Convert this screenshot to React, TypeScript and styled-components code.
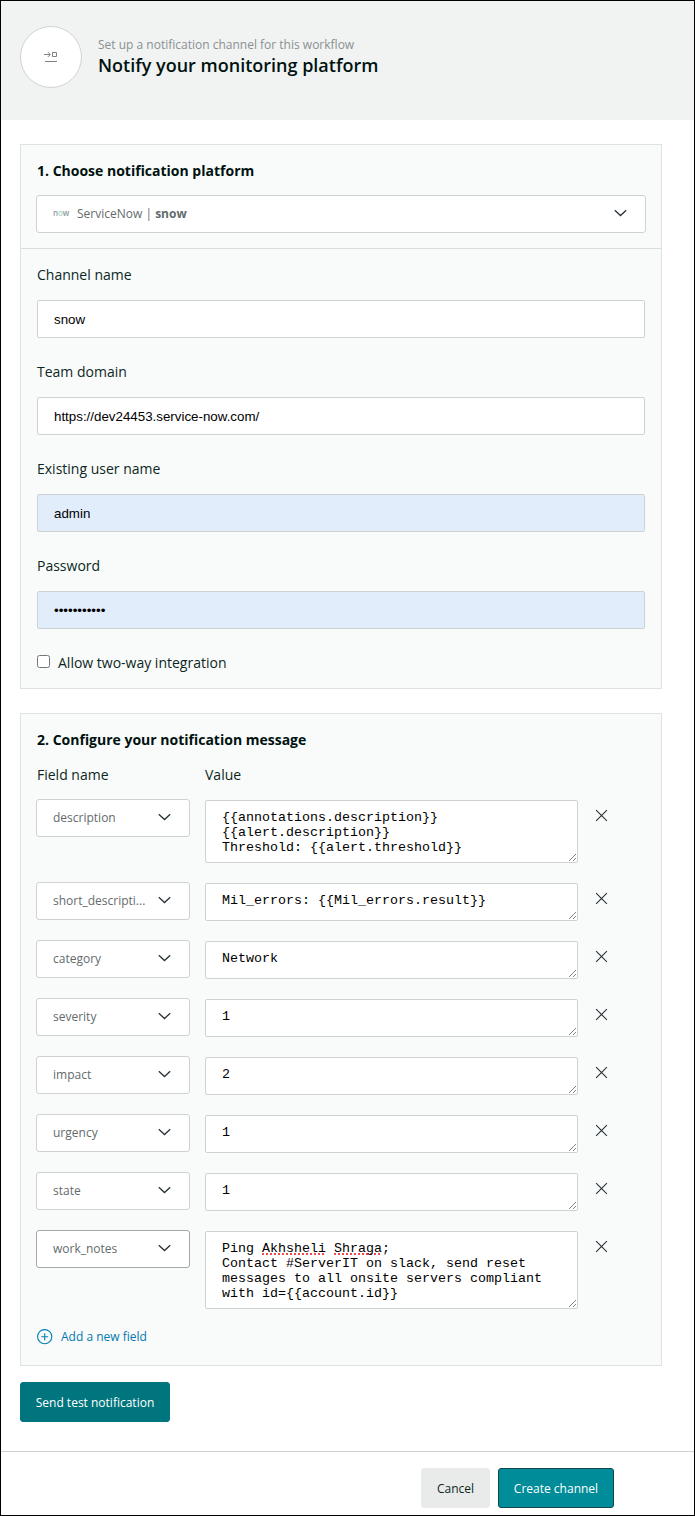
import React from 'react';
import styled, { createGlobalStyle } from 'styled-components';

const Global = createGlobalStyle`
  *, *::before, *::after { box-sizing: border-box; }
  body { margin: 0; background: #fff; }
`;

const Page = styled.div`
  width: 695px;
  height: 1516px;
  border: 1px solid #000;
  background: #fff;
  color: #00120f;
  font-family: 'Open Sans', 'Noto Sans', sans-serif;
  font-size: 14px;
  display: flex;
  flex-direction: column;
`;

const Header = styled.header`
  display: flex;
  flex: none;
  height: 119px;
  padding: 25px 19px;
  gap: 16px;
  background: #f1f3f3;
`;

const RoundIcon = styled.div`
  display: flex;
  align-items: center;
  justify-content: center;
  width: 62px;
  height: 62px;
  border: 1px solid #d0d3d3;
  border-radius: 50%;
  background: #fff;
`;

const Heading = styled.div`
  padding-top: 10px;
`;

const Subtitle = styled.div`
  font-size: 12px;
  line-height: 18px;
  color: #8a9090;
  white-space: nowrap;
`;

const Title = styled.h1`
  margin: 0;
  font-size: 18px;
  line-height: 22px;
  font-weight: 600;
  white-space: nowrap;
`;

const Main = styled.main`
  display: flex;
  flex: 1;
  flex-direction: column;
  align-items: flex-start;
  padding: 24px 32px 0 19px;
`;

const Panel = styled.section<{ $height: number }>`
  width: 642px;
  height: ${(p) => p.$height}px;
  margin-bottom: ${(p) => (p.$height > 600 ? 16 : 24)}px;
  border: 1px solid #dfe2e2;
  background: #f9fbfa;
`;

const PlatformArea = styled.div`
  height: 104px;
  padding: 16px 16px 0;
  border-bottom: 1px solid #dadddd;
`;

const FormArea = styled.div`
  padding: 16px 16px 0;
`;

const SectionTitle = styled.h2`
  margin: 0;
  font-size: 14px;
  line-height: 20px;
  font-weight: 700;
  white-space: nowrap;
`;

const Select = styled.div<{ $wide?: boolean; $active?: boolean }>`
  display: flex;
  align-items: center;
  justify-content: space-between;
  width: ${(p) => (p.$wide ? 610 : 154)}px;
  height: 38px;
  margin: ${(p) => (p.$wide ? '14px' : '-1px')} -1px 0;
  padding: 0 18px 2px 16px;
  border: 1px solid ${(p) => (p.$active ? '#a3a8a8' : '#cfd2d2')};
  border-radius: 3px;
  background: #fff;
  color: #646b6c;
  font-size: 12px;
  white-space: nowrap;
`;

const Platform = styled.span`
  display: flex;
  align-items: center;
  gap: 8px;

  b { font-weight: 700; }
`;

const NowMark = styled.span`
  width: 16px;
  font-size: 8px;
  line-height: 10px;
  font-weight: 600;
  letter-spacing: -0.1px;
  color: #8f9a9a;

  i { font-style: normal; color: #9adcc6; }
`;

const Label = styled.label`
  display: block;
  line-height: 20px;
  color: #0c2723;
  white-space: nowrap;
`;

const Field = styled.div`
  height: 97px;
`;

const Input = styled.input<{ $filled?: boolean }>`
  display: block;
  width: 608px;
  height: 38px;
  margin: 15px 0 0;
  padding: 1px 16px 0;
  border: 1px solid #cfd2d2;
  border-radius: 2px;
  outline: none;
  background: ${(p) => (p.$filled ? '#e2edfc' : '#fff')};
  color: #000;
  font: 13.333px 'Liberation Sans', Arial, sans-serif;
`;

const CheckRow = styled.div`
  display: flex;
  align-items: center;
  gap: 8px;
`;

const Checkbox = styled.input`
  width: 13px;
  height: 13px;
  margin: 0 0 3px;
`;

const Columns = styled.div`
  display: grid;
  grid-template-columns: 168px 1fr;
  margin: 15px 0;
`;

const Rows = styled.div`
  display: flex;
  flex-direction: column;
  gap: 20px;
`;

const Row = styled.div`
  display: grid;
  grid-template-columns: 152px 373px 14px;
  column-gap: 16px;
  align-items: start;
`;

const MessageBox = styled.div`
  position: relative;
  min-height: 38px;
  padding: 9px 16px 7px;
  border: 1px solid #cfd2d2;
  border-radius: 2px;
  background: #fff;
  color: #000;
  font: 13.333px/15px 'Liberation Mono', 'Courier New', monospace;
  white-space: pre;
`;

const Line = styled.div`
  display: flex;
  height: 15px;
`;

const Grip = styled.svg`
  position: absolute;
  right: 0;
  bottom: 0;
`;

const Misspelled = styled.span`
  height: 15px;
  text-decoration: underline dotted #f0494c 2px;
  text-underline-offset: 1px;
  text-decoration-skip-ink: none;
`;

const RemoveButton = styled.button`
  display: flex;
  margin: 8px 0 0 1px;
  padding: 0;
  border: 0;
  background: none;
`;

const AddField = styled.a`
  display: flex;
  align-items: center;
  gap: 8px;
  margin-top: 19px;
  line-height: 18px;
  font-size: 12px;
  color: #0079b0;
`;

const Button = styled.button<{ $kind: 'test' | 'cancel' | 'create' }>`
  width: ${(p) => ({ test: 150, cancel: 69, create: 116 })[p.$kind]}px;
  height: 40px;
  padding: 2px 0 0;
  border: 1px solid ${(p) => ({ test: '#00757d', cancel: '#e9ebeb', create: '#10494d' })[p.$kind]};
  border-radius: 3px;
  background: ${(p) => ({ test: '#00757d', cancel: '#e9ebeb', create: '#008c99' })[p.$kind]};
  color: ${(p) => (p.$kind === 'cancel' ? '#0c2723' : '#fff')};
  font: 12px/18px 'Open Sans', 'Noto Sans', sans-serif;
  white-space: nowrap;
`;

const Footer = styled.footer`
  display: flex;
  flex: none;
  justify-content: flex-end;
  gap: 8px;
  height: 64px;
  padding: 16px 80px 0 0;
  border-top: 1px solid #cfd2d2;
`;

const Chevron = () => (
  <svg width="13" height="8" viewBox="0 0 13 8" fill="none" stroke="#293338" strokeWidth="1.3">
    <path d="M0.8 1.2l5.7 5.3 5.7-5.3" />
  </svg>
);

const Cross = () => (
  <svg width="14" height="14" viewBox="0 0 14 14" fill="none" stroke="#293338" strokeWidth="1.2">
    <path d="M1.2 1.7l11.6 11.6M12.8 1.7L1.2 13.3" />
  </svg>
);

const messages: { name: string; lines: React.ReactNode[]; active?: boolean }[] = [
  { name: 'description', lines: ['{{annotations.description}}', '{{alert.description}}', 'Threshold: {{alert.threshold}}'] },
  { name: 'short_descripti...', lines: ['Mil_errors: {{Mil_errors.result}}'] },
  { name: 'category', lines: ['Network'] },
  { name: 'severity', lines: ['1'] },
  { name: 'impact', lines: ['2'] },
  { name: 'urgency', lines: ['1'] },
  { name: 'state', lines: ['1'] },
  {
    name: 'work_notes',
    active: true,
    lines: [
      <>
        <span>{'Ping '}</span>
        <Misspelled>Akhsheli</Misspelled>
        <span> </span>
        <Misspelled>Shraga</Misspelled>
        <span>;</span>
      </>,
      'Contact #ServerIT on slack, send reset',
      'messages to all onsite servers compliant',
      'with id={{account.id}}',
    ],
  },
];

export default function App() {
  return (
    <Page>
      <Global />
      <Header>
        <RoundIcon>
          <svg width="14" height="12" viewBox="0 0 14 12" fill="none" stroke="#7c8384">
            <path d="M0 3.5h6M3.8 1l2.5 2.5L3.8 6M1 10.5h12" />
            <path d="M8.5 1.5h4v4h-4z" />
          </svg>
        </RoundIcon>
        <Heading>
          <Subtitle>Set up a notification channel for this workflow</Subtitle>
          <Title>Notify your monitoring platform</Title>
        </Heading>
      </Header>
      <Main>
        <Panel $height={545}>
          <PlatformArea>
            <SectionTitle>1. Choose notification platform</SectionTitle>
            <Select $wide>
              <Platform>
                <NowMark>n<i>o</i>w</NowMark>
                <span>ServiceNow | <b>snow</b></span>
              </Platform>
              <Chevron />
            </Select>
          </PlatformArea>
          <FormArea>
            <Field>
              <Label>Channel name</Label>
              <Input defaultValue="snow" />
            </Field>
            <Field>
              <Label>Team domain</Label>
              <Input defaultValue="https://dev24453.service-now.com/" />
            </Field>
            <Field>
              <Label>Existing user name</Label>
              <Input $filled defaultValue="admin" />
            </Field>
            <Field>
              <Label>Password</Label>
              <Input $filled type="password" defaultValue="monitoring1" />
            </Field>
            <CheckRow>
              <Checkbox type="checkbox" />
              <Label>Allow two-way integration</Label>
            </CheckRow>
          </FormArea>
        </Panel>
        <Panel $height={653}>
          <FormArea>
            <SectionTitle>2. Configure your notification message</SectionTitle>
            <Columns>
              <Label>Field name</Label>
              <Label>Value</Label>
            </Columns>
            <Rows>
              {messages.map((m) => (
                <Row key={m.name}>
                  <Select $active={m.active}>
                    {m.name}
                    <Chevron />
                  </Select>
                  <MessageBox>
                    {m.lines.map((line, i) => (
                      <Line key={i}>{line}</Line>
                    ))}
                    <Grip width="9" height="9" viewBox="0 0 9 9" stroke="#777" strokeWidth="0.9">
                      <path d="M1 8l7-7M5 8l3-3" />
                    </Grip>
                  </MessageBox>
                  <RemoveButton aria-label="Remove field">
                    <Cross />
                  </RemoveButton>
                </Row>
              ))}
            </Rows>
            <AddField>
              <svg width="16" height="16" viewBox="0 0 16 16" fill="none" stroke="#0080b4" strokeWidth="1.1">
                <circle cx="7.7" cy="7.7" r="7.1" />
                <path d="M7.7 4.2v7M4.2 7.7h7" />
              </svg>
              Add a new field
            </AddField>
          </FormArea>
        </Panel>
        <Button $kind="test">Send test notification</Button>
      </Main>
      <Footer>
        <Button $kind="cancel">Cancel</Button>
        <Button $kind="create">Create channel</Button>
      </Footer>
    </Page>
  );
}
